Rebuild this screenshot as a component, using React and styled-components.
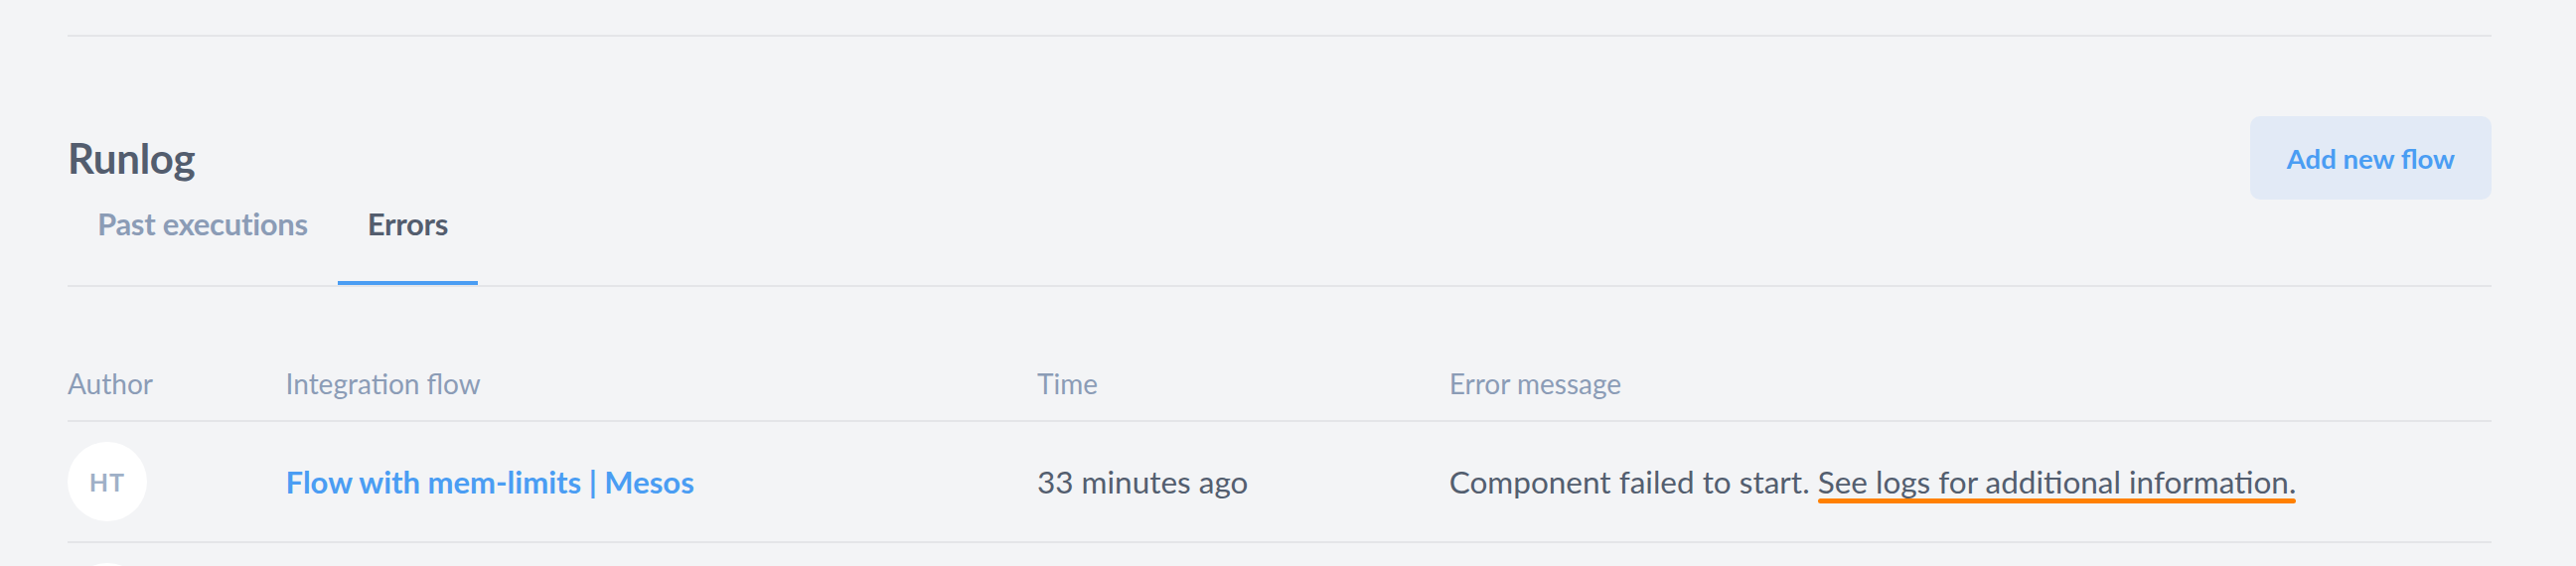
import React from "react";
import styled, { createGlobalStyle } from "styled-components";

const GlobalStyle = createGlobalStyle`
  html, body {
    margin: 0;
    padding: 0;
    background: #f3f4f6;
  }
  body {
    font-family: Lato, "Open Sans", "Noto Sans", sans-serif;
    color: #535e6f;
    -webkit-font-smoothing: antialiased;
  }
  * { box-sizing: border-box; }
`;

const Page = styled.div`
  padding: 35px 85px 0 68px;
  height: 570px;
  overflow: hidden;
`;

const Divider = styled.div`
  height: 2px;
  background: #e4e5e8;
`;

const Header = styled.div`
  display: flex;
  align-items: center;
  justify-content: space-between;
  margin-top: 80px;
  height: 84px;
`;

const Title = styled.h1`
  margin: 0;
  font-size: 42px;
  line-height: 1;
  font-weight: 700;
  letter-spacing: -0.3px;
  color: #535d6e;
`;

const PrimaryButton = styled.button`
  width: 243px;
  height: 84px;
  border: none;
  border-radius: 10px;
  background: #e2eaf6;
  color: #4a9df3;
  font-family: inherit;
  font-size: 27.5px;
  font-weight: 700;
  cursor: pointer;
`;

const Tabs = styled.div`
  display: flex;
  border-bottom: 2px solid #e4e5e8;
`;

const Tab = styled.div`
  padding: 8px 30px 0;
  height: 86px;
  font-size: 31px;
  line-height: 32px;
  font-weight: 700;
  letter-spacing: -0.3px;
  color: ${(p) => (p.$active ? "#535d6e" : "#8b9cb6")};
  border-bottom: 4px solid ${(p) => (p.$active ? "#4a9df3" : "transparent")};
  cursor: pointer;
`;

const Table = styled.div`
  margin-top: 83px;
`;

const Row = styled.div`
  display: grid;
  grid-template-columns: 9% 31% 17% 43%;
  align-items: center;
  border-bottom: 2px solid #e4e5e8;
  padding: ${(p) => (p.$head ? "0 0 23px" : "20px 0")};
`;

const HeadCell = styled.div`
  font-size: 28px;
  line-height: 28px;
  color: #8b9cb6;
`;

const Cell = styled.div`
  font-size: 31.5px;
  line-height: 32px;
  color: #535e6f;
`;

const Avatar = styled.div`
  width: 80px;
  height: 80px;
  border-radius: 50%;
  background: #ffffff;
  display: flex;
  align-items: center;
  justify-content: center;
  font-size: 25px;
  font-weight: 700;
  color: #9fb0c7;
  letter-spacing: 1px;
`;

const FlowLink = styled.a`
  font-size: 31px;
  font-weight: 700;
  color: #4a9df3;
  text-decoration: none;
`;

const LogLink = styled.span`
  position: relative;
  &::after {
    content: "";
    position: absolute;
    left: 0;
    right: 0;
    bottom: -3px;
    height: 5px;
    border-radius: 3px;
    background: #ff8000;
  }
`;

const rows = [
  {
    initials: "HT",
    flow: "Flow with mem-limits | Mesos",
    time: "33 minutes ago",
    error: "Component failed to start.",
    link: "See logs for additional information.",
  },
  {
    initials: "HT",
    flow: "Flow with mem-limits | Mesos",
    time: "35 minutes ago",
    error: "Component failed to start.",
    link: "See logs for additional information.",
  },
];

export default function App() {
  return (
    <>
      <GlobalStyle />
      <Page>
        <Divider />
        <Header>
          <Title>Runlog</Title>
          <PrimaryButton>Add new flow</PrimaryButton>
        </Header>
        <Tabs>
          <Tab>Past executions</Tab>
          <Tab $active>Errors</Tab>
        </Tabs>
        <Table>
          <Row $head>
            <HeadCell>Author</HeadCell>
            <HeadCell>Integration flow</HeadCell>
            <HeadCell>Time</HeadCell>
            <HeadCell>Error message</HeadCell>
          </Row>
          {rows.map((r, i) => (
            <Row key={i}>
              <Avatar>{r.initials}</Avatar>
              <Cell>
                <FlowLink href="#">{r.flow}</FlowLink>
              </Cell>
              <Cell>{r.time}</Cell>
              <Cell>
                {r.error} <LogLink>{r.link}</LogLink>
              </Cell>
            </Row>
          ))}
        </Table>
      </Page>
    </>
  );
}
